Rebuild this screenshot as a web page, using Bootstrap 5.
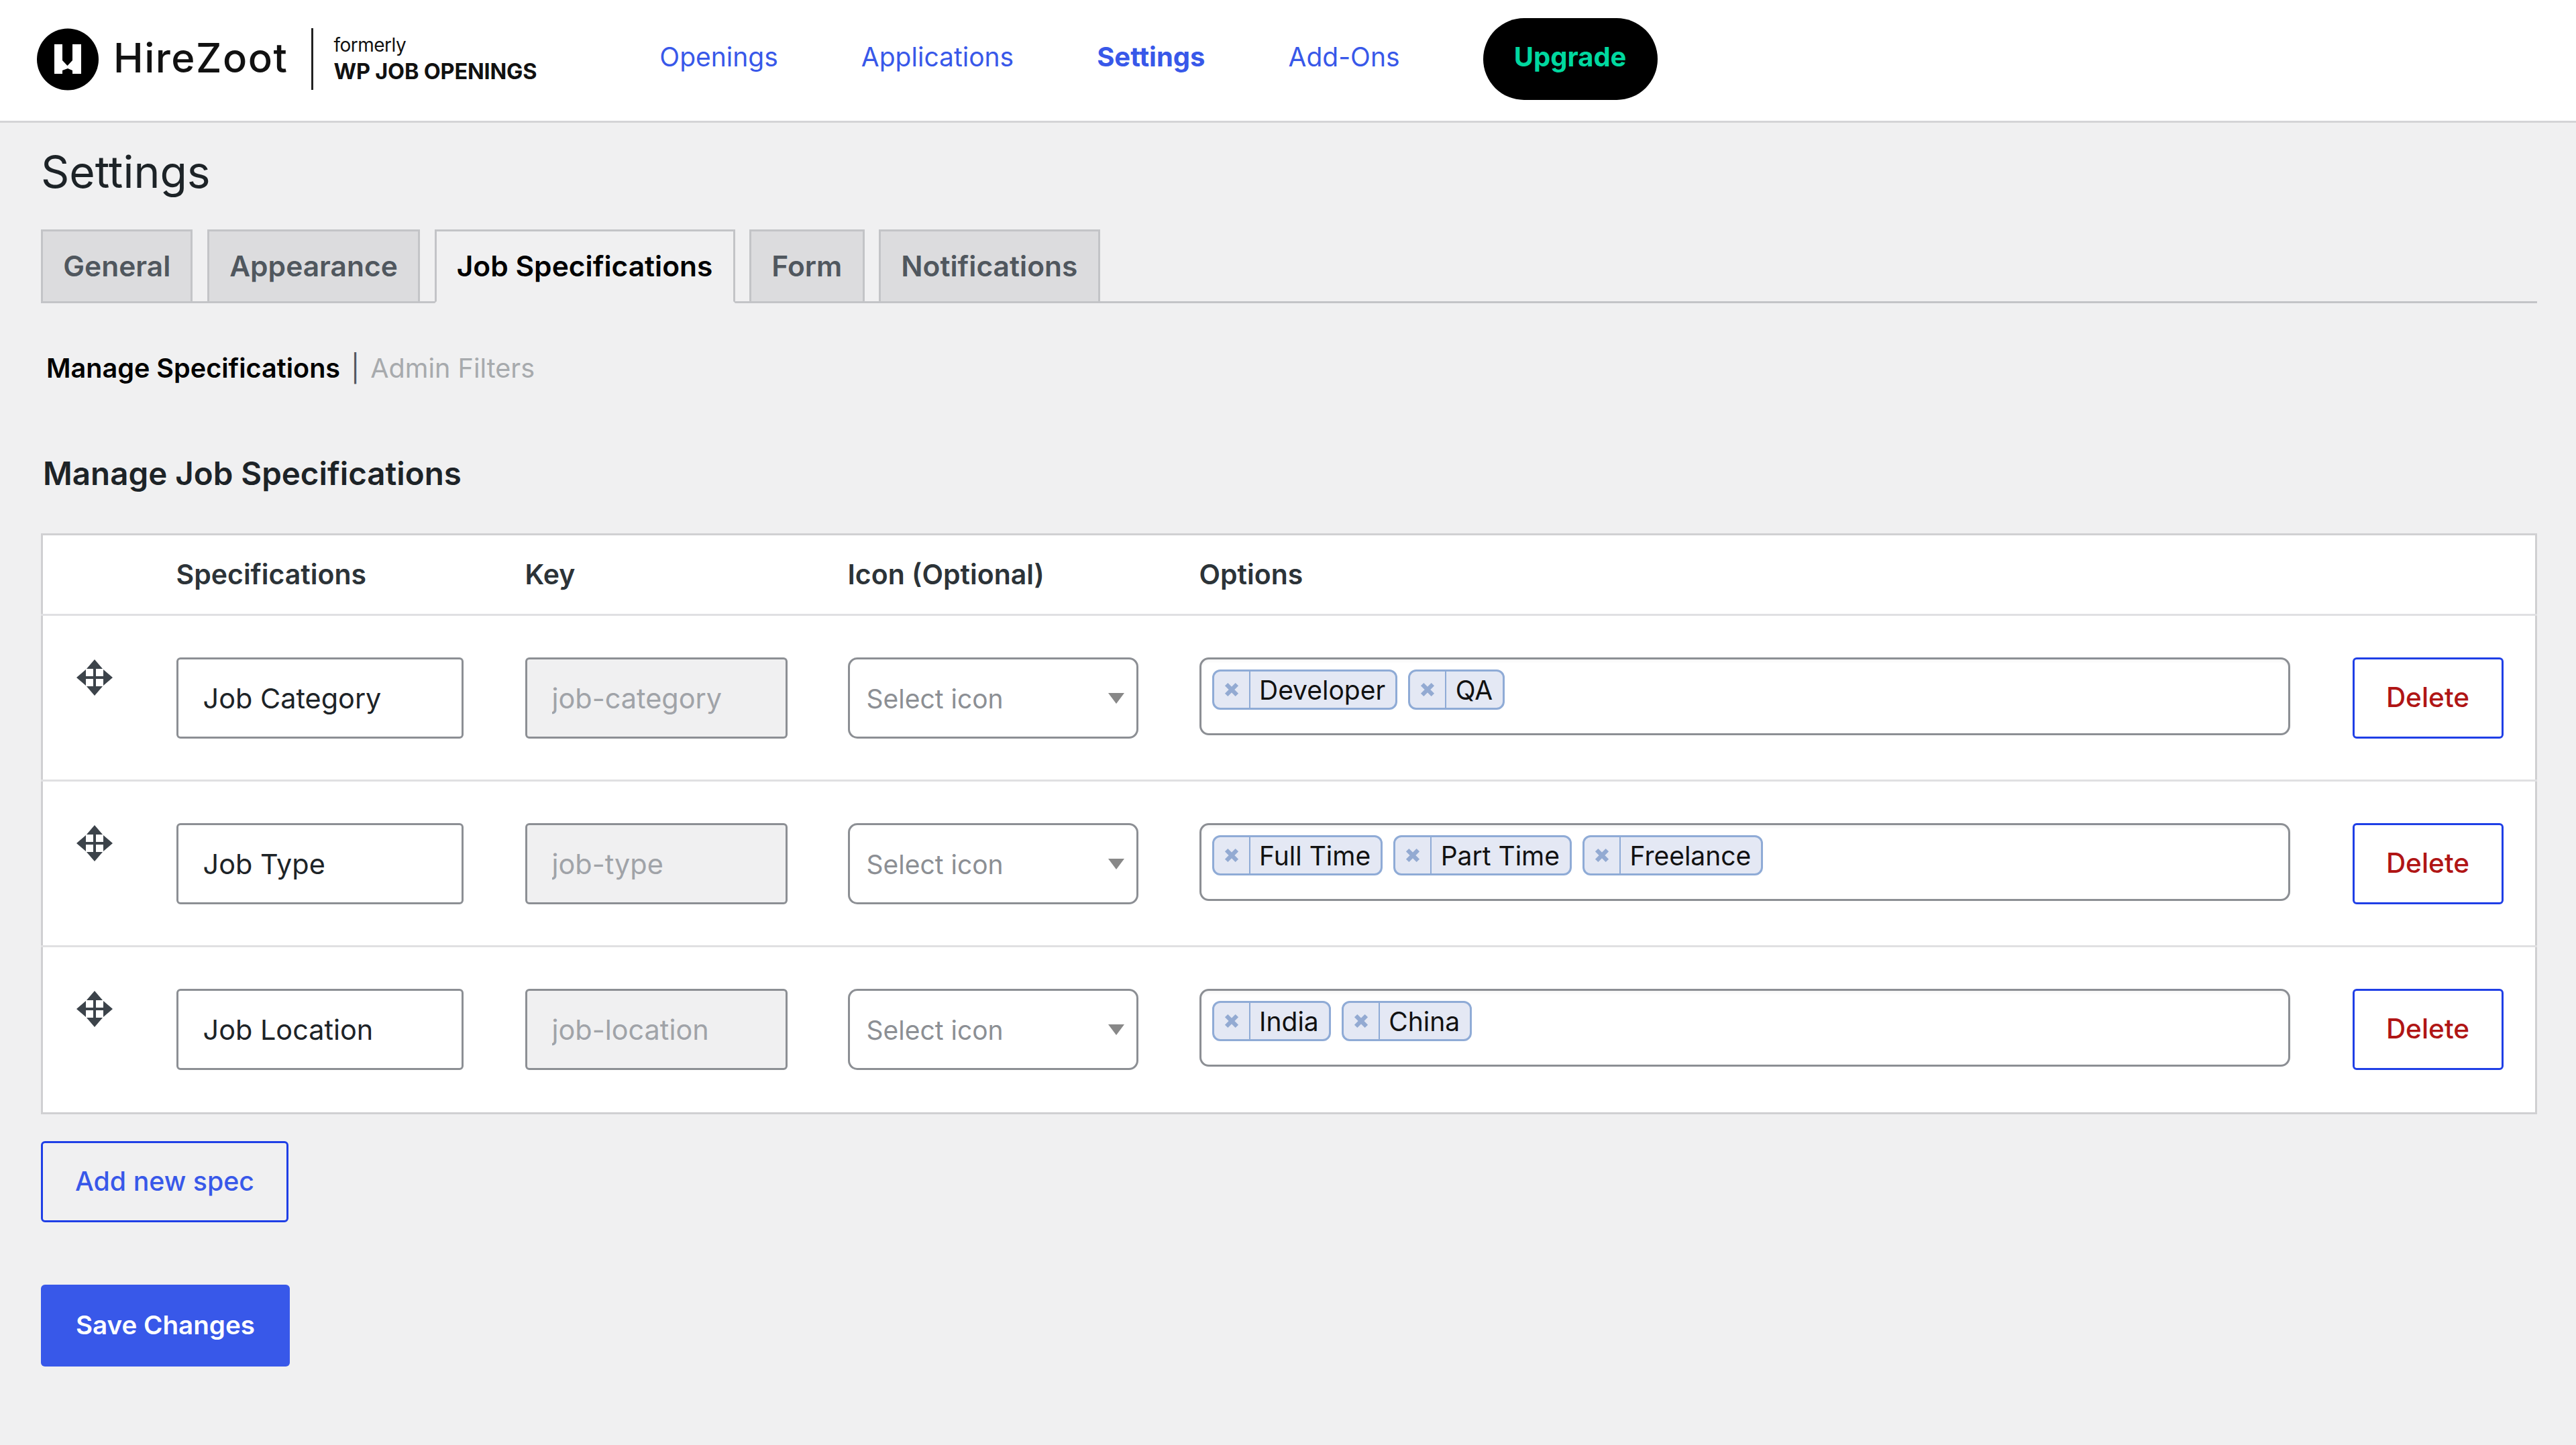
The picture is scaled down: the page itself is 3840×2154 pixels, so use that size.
<!DOCTYPE html>
<html lang="en">
<head>
    <meta charset="UTF-8">
    <title>Settings - HireZoot</title>
    <link href="https://cdn.jsdelivr.net/npm/bootstrap@5.3.0/dist/css/bootstrap.min.css" rel="stylesheet">
    <style>
        body {
            background: #f0f0f1;
            color: #1d2327;
            font-family: Inter, "Liberation Sans", sans-serif;
            font-size: 40px;
            min-height: 100vh;
        }
        .top-bar {
            background: #fff;
            height: 183px;
            border-bottom: 3px solid #d4d4d6;
            padding: 0 0 4px 55px;
            gap: 183px;
        }
        .logo-mark { width: 92px; height: 93px; margin-right: 22px; }
        .logo-name { font-size: 60px; font-weight: 500; color: #111; letter-spacing: 1.5px; margin-bottom: 4px; }
        .logo-rule { width: 3px; height: 92px; background: #222; margin: 0 30px 0 35px; }
        .logo-old { line-height: 1; color: #111; }
        .logo-old span { display: block; font-size: 28px; margin-bottom: 10px; letter-spacing: -.5px; }
        .logo-old strong { display: block; font-size: 32.5px; font-weight: 700; letter-spacing: -.2px; }
        .top-links { gap: 124px; }
        .top-links a { color: #3858e9; text-decoration: none; font-size: 39px; margin-bottom: 6px; }
        .top-links a.here { font-weight: 700; font-size: 40px; }
        .top-links a.upgrade {
            background: #000;
            color: #00d89f;
            font-weight: 700;
            font-size: 40px;
            width: 260px;
            height: 122px;
            border-radius: 61px;
            margin-bottom: 0;
            padding-bottom: 6px;
        }
        .page-wrap { padding: 0 58px 0 61px; }
        .page-name { font-size: 66px; font-weight: 400; margin: 33px 0 46px 0; line-height: 80px; }
        .tab-row { gap: 21.5px; border-bottom: 3px solid #c3c4c7; }
        .tab-row .nav-link {
            background: #dcdcde;
            border: 3px solid #c3c4c7;
            border-radius: 0;
            color: #50575e;
            font-size: 42.5px;
            font-weight: 600;
            height: 110px;
            padding: 0 30.2px;
            margin-bottom: -3px;
            display: flex;
            align-items: center;
        }
        .tab-row .nav-link.active { background: #f0f0f1; border-bottom-color: #f0f0f1; color: #000; }
        .sub-links { margin: 73px 0 0 8px; line-height: 48px; font-size: 39.6px; }
        .sub-links b { font-weight: 600; color: #000; }
        .sub-links i { font-style: normal; margin: 0 16px; color: #50575e; }
        .sub-links a { color: #a7aaad; text-decoration: none; }
        .block-name { font-size: 47.5px; font-weight: 600; margin: 103px 0 0 3px; line-height: 60px; }
        .spec-table {
            --bs-table-bg: #fff;
            table-layout: fixed;
            width: 100%;
            margin: 59px 0 0;
            border: 3px solid #d0d0d2;
        }
        .spec-table th {
            font-size: 41px;
            font-weight: 600;
            color: #2c3338;
            height: 120px;
            padding: 0;
            border-bottom: 3px solid #e0e0e2;
            vertical-align: middle;
        }
        .spec-table td {
            height: 247px;
            padding: 0;
            border-bottom: 3px solid #e0e0e2;
            vertical-align: top;
            padding-top: 62px;
        }
        .spec-table tr:last-child td { border-bottom: 0; height: 249px; }
        .grip { display: block; width: 54px; height: 54px; margin: 3px 0 0 50px; }
        .spec-field {
            height: 121px;
            width: 428px;
            border: 3px solid #8c8f94;
            border-radius: 6px;
            padding: 0 37px;
            font-size: 41.4px;
            color: #1d2327;
        }
        .spec-field.key-field { width: 391px; background: #f0f0f1; color: #a0a3a8; opacity: 1; }
        .icon-pick {
            height: 121px;
            width: 433px;
            border: 3px solid #8c8f94;
            border-radius: 14px;
            padding: 4px 0 0 25px;
            font-size: 39px;
            color: #8c8f94;
            background-color: #fff;
            background-image: url("data:image/svg+xml,%3Csvg xmlns='http://www.w3.org/2000/svg' viewBox='0 0 24 16'%3E%3Cpath d='M0 0h24L12 16z' fill='%23888'/%3E%3C/svg%3E");
            background-position: right 18px center;
            background-size: 24px 16px;
        }
        .tag-box {
            height: 116px;
            width: 1626px;
            border: 3px solid #8c8f94;
            border-radius: 14px;
            padding: 15px 16px;
            gap: 16px;
            box-shadow: inset 0 3px 4px rgba(0,0,0,.04);
        }
        .tag-item {
            height: 60px;
            border: 3px solid #8fabd6;
            border-radius: 12px;
            background: #e4e8f4;
            font-size: 39px;
            color: #111;
            line-height: 1;
        }
        .tag-x {
            width: 54px;
            height: 100%;
            border-right: 2px solid #8fabd6;
        }
        .tag-x svg { width: 22px; height: 22px; }
        .tag-text { padding: 0 15px 0 13.5px; }
        .drop-btn {
            width: 225px;
            height: 121px;
            background: #fff;
            border: 3px solid #1f3fe6;
            border-radius: 6px;
            color: #b01515;
            font-size: 40.5px;
            font-weight: 500;
            padding: 0;
        }
        .add-btn, .save-btn {
            display: flex;
            align-items: center;
            justify-content: center;
            border-radius: 6px;
            font-size: 39.3px;
            font-weight: 500;
            padding: 0;
        }
        .add-btn {
            width: 369px;
            height: 121px;
            margin-top: 40px;
            border: 3px solid #1f3fe6;
            color: #3858e9;
        }
        .save-btn {
            width: 371px;
            height: 122px;
            margin-top: 93px;
            background: #3858e9;
            border: 0;
            color: #fff;
            font-size: 38.6px;
            font-weight: 600;
        }
    </style>
</head>
<body>
    <!-- Top bar -->
    <header class="top-bar d-flex align-items-center">
        <div class="d-flex align-items-center">
            <svg class="logo-mark" viewBox="0 0 92 93">
                <circle cx="46" cy="46.5" r="46" fill="#000"/>
                <path d="M26 24H38V48L45.5 56L53 48V24H66V68H53V63L46 60L38 63V68H26Z" fill="#fff"/>
            </svg>
            <span class="logo-name">HireZoot</span>
            <span class="logo-rule"></span>
            <span class="logo-old"><span>formerly</span><strong>WP JOB OPENINGS</strong></span>
        </div>
        <nav class="top-links d-flex align-items-center">
            <a href="#">Openings</a>
            <a href="#">Applications</a>
            <a href="#" class="here">Settings</a>
            <a href="#">Add-Ons</a>
            <a href="#" class="upgrade d-flex align-items-center justify-content-center">Upgrade</a>
        </nav>
    </header>

    <main class="page-wrap">
        <h1 class="page-name">Settings</h1>

        <ul class="nav tab-row">
            <li class="nav-item"><a class="nav-link" href="#">General</a></li>
            <li class="nav-item"><a class="nav-link" href="#">Appearance</a></li>
            <li class="nav-item"><a class="nav-link active" href="#">Job Specifications</a></li>
            <li class="nav-item"><a class="nav-link" href="#">Form</a></li>
            <li class="nav-item"><a class="nav-link" href="#">Notifications</a></li>
        </ul>

        <div class="sub-links"><b>Manage Specifications</b><i>|</i><a href="#">Admin Filters</a></div>

        <h2 class="block-name">Manage Job Specifications</h2>

        <table class="table spec-table">
            <colgroup>
                <col style="width:200px"><col style="width:520px"><col style="width:481px">
                <col style="width:524px"><col style="width:1719px"><col style="width:274px">
            </colgroup>
            <thead>
                <tr><th></th><th>Specifications</th><th>Key</th><th>Icon (Optional)</th><th>Options</th><th></th></tr>
            </thead>
            <tbody id="spec-rows"></tbody>
        </table>

        <a href="#" class="btn add-btn">Add new spec</a>
        <button type="button" class="btn save-btn">Save Changes</button>
    </main>

    <script>
    // Rows of the spec table
    const specs = [
        {name: 'Job Category', key: 'job-category', tags: ['Developer', 'QA']},
        {name: 'Job Type', key: 'job-type', tags: ['Full Time', 'Part Time', 'Freelance']},
        {name: 'Job Location', key: 'job-location', tags: ['India', 'China']}
    ];
    const grip = `<svg class="grip" viewBox="0 0 54 54" fill="#3c434a">
        <path d="M27 0L39 14H15zM27 54L15 40H39zM0 27L14 15V39zM54 27L40 39V15z"/>
        <path d="M25 10h4v34h-4zM10 25h34v4H10z"/></svg>`;
    const cross = `<svg viewBox="0 0 21 21"><path d="M3 3L18 18M18 3L3 18" stroke="#93aad2" stroke-width="6"/></svg>`;
    document.getElementById('spec-rows').innerHTML = specs.map(s => `
        <tr>
            <td>${grip}</td>
            <td><input type="text" class="form-control spec-field" value="${s.name}"></td>
            <td><input type="text" class="form-control spec-field key-field" value="${s.key}" disabled></td>
            <td><select class="form-select icon-pick"><option>Select icon</option></select></td>
            <td><div class="tag-box d-flex align-items-start">${s.tags.map(t => `
                <span class="tag-item d-inline-flex align-items-center">
                    <span class="tag-x d-flex align-items-center justify-content-center">${cross}</span>
                    <span class="tag-text">${t}</span>
                </span>`).join('')}</div></td>
            <td><button type="button" class="btn drop-btn">Delete</button></td>
        </tr>`).join('');
    </script>
    <script src="https://cdn.jsdelivr.net/npm/bootstrap@5.3.0/dist/js/bootstrap.bundle.min.js"></script>
</body>
</html>
